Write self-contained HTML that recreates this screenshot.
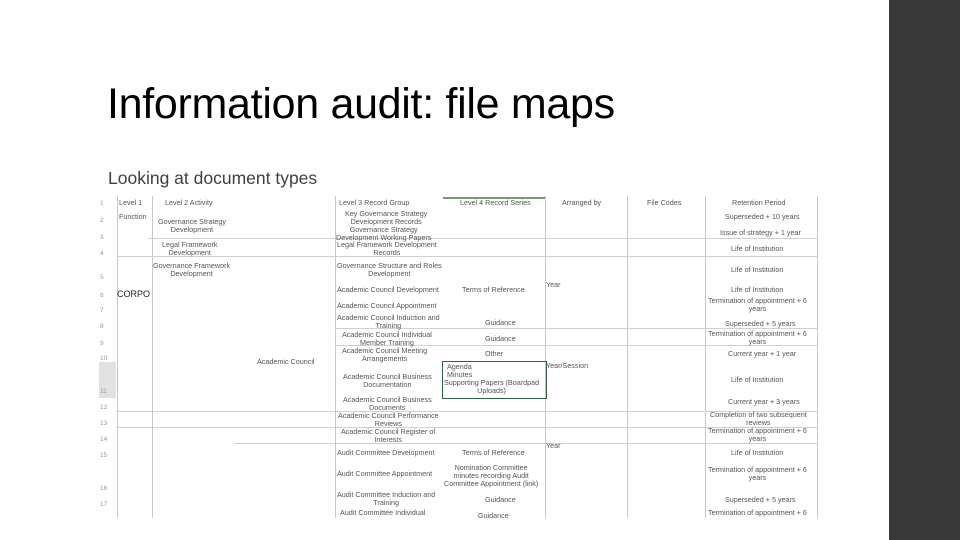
<!DOCTYPE html>
<html><head><meta charset="utf-8"><style>
*{margin:0;padding:0}
body{width:960px;height:540px;position:relative;background:#fff;font-family:"Liberation Sans",sans-serif;overflow:hidden}
#side{position:absolute;left:889px;top:0;width:71px;height:540px;background:#383838}
h1{position:absolute;left:107px;top:80px;font-size:43px;font-weight:normal;color:#000;white-space:nowrap;letter-spacing:-0.3px}
.sub{position:absolute;left:108px;top:168px;font-size:17.5px;color:#404040;white-space:nowrap}
.v{position:absolute;width:1px;background:#c8c8c8}
.h{position:absolute;height:1px;background:#d0d0d0}
.t{position:absolute;font-size:7.2px;color:#555;text-align:center;line-height:8px;white-space:nowrap}
.n{position:absolute;left:100px;font-size:6.5px;color:#999}
</style></head><body>
<div id="side"></div>
<h1>Information audit: file maps</h1>
<div class="sub">Looking at document types</div>

<div class="v" style="left:117px;top:196px;height:322px"></div>
<div class="v" style="left:152px;top:196px;height:322px"></div>
<div class="v" style="left:335px;top:196px;height:322px"></div>
<div class="v" style="left:545px;top:196px;height:322px"></div>
<div class="v" style="left:627px;top:196px;height:322px"></div>
<div class="v" style="left:705px;top:196px;height:322px"></div>
<div class="v" style="left:817px;top:196px;height:322px"></div>
<div style="position:absolute;left:443px;top:197px;width:102px;height:2px;background:#6a9e78"></div>
<div style="position:absolute;left:99px;top:362px;width:17px;height:36px;background:#e2e2e2"></div>

<div class="h" style="left:148px;top:238px;width:669px"></div>
<div class="h" style="left:117px;top:256px;width:700px"></div>
<div class="h" style="left:335px;top:328px;width:482px"></div>
<div class="h" style="left:335px;top:345px;width:482px"></div>
<div class="h" style="left:117px;top:411px;width:700px"></div>
<div class="h" style="left:117px;top:427px;width:700px"></div>
<div class="h" style="left:234px;top:443px;width:583px"></div>
<div style="position:absolute;left:442px;top:361px;width:103px;height:36px;border:1px solid #2f5f40"></div>

<div class="n" style="top:200px">1</div><div class="n" style="top:217px">2</div><div class="n" style="top:234px">3</div><div class="n" style="top:250px">4</div><div class="n" style="top:274px">5</div><div class="n" style="top:292px">6</div><div class="n" style="top:307px">7</div><div class="n" style="top:323px">8</div><div class="n" style="top:340px">9</div><div class="n" style="top:355px">10</div><div class="n" style="top:388px">11</div><div class="n" style="top:404px">12</div><div class="n" style="top:420px">13</div><div class="n" style="top:436px">14</div><div class="n" style="top:452px">15</div><div class="n" style="top:485px">16</div><div class="n" style="top:501px">17</div>

<div class="t" style="left:119px;top:199px">Level 1</div>
<div class="t" style="left:119px;top:213px">Function</div>
<div class="t" style="left:117px;top:290px;font-size:9px;color:#222">CORPO</div>
<div class="t" style="left:165px;top:199px">Level 2 Activity</div>
<div class="t" style="left:158px;top:218px">Governance Strategy<br>Development</div>
<div class="t" style="left:162px;top:241px">Legal Framework<br>Development</div>
<div class="t" style="left:153px;top:262px">Governance Framework<br>Development</div>
<div class="t" style="left:257px;top:358px">Academic Council</div>
<div class="t" style="left:339px;top:199px">Level 3 Record Group</div>
<div class="t" style="left:345px;top:210px">Key Governance Strategy<br>Development Records</div>
<div class="t" style="left:336px;top:226px">Governance Strategy<br>Development Working Papers</div>
<div class="t" style="left:337px;top:241px">Legal Framework Development<br>Records</div>
<div class="t" style="left:337px;top:262px">Governance Structure and Roles<br>Development</div>
<div class="t" style="left:337px;top:286px">Academic Council Development</div>
<div class="t" style="left:337px;top:302px">Academic Council Appointment</div>
<div class="t" style="left:337px;top:314px">Academic Council Induction and<br>Training</div>
<div class="t" style="left:342px;top:331px">Academic Council Individual<br>Member Training</div>
<div class="t" style="left:342px;top:347px">Academic Council Meeting<br>Arrangements</div>
<div class="t" style="left:343px;top:373px">Academic Council Business<br>Documentation</div>
<div class="t" style="left:343px;top:396px">Academic Council Business<br>Documents</div>
<div class="t" style="left:338px;top:412px">Academic Council Performance<br>Reviews</div>
<div class="t" style="left:341px;top:428px">Academic Council Register of<br>Interests</div>
<div class="t" style="left:337px;top:449px">Audit Committee Development</div>
<div class="t" style="left:337px;top:470px">Audit Committee Appointment</div>
<div class="t" style="left:337px;top:491px">Audit Committee Induction and<br>Training</div>
<div class="t" style="left:340px;top:509px">Audit Committee Individual</div>
<div class="t" style="left:460px;top:199px">Level 4 Record Series</div>
<div class="t" style="left:462px;top:286px">Terms of Reference</div>
<div class="t" style="left:485px;top:319px">Guidance</div>
<div class="t" style="left:485px;top:335px">Guidance</div>
<div class="t" style="left:485px;top:350px">Other</div>
<div class="t" style="left:447px;top:363px;text-align:left">Agenda<br>Minutes</div>
<div class="t" style="left:444px;top:379px">Supporting Papers (Boardpad<br>Uploads)</div>
<div class="t" style="left:462px;top:449px">Terms of Reference</div>
<div class="t" style="left:444px;top:464px">Nomination Committee<br>minutes recording Audit<br>Committee Appointment (link)</div>
<div class="t" style="left:485px;top:496px">Guidance</div>
<div class="t" style="left:478px;top:512px">Guidance</div>
<div class="t" style="left:546px;top:281px">Year</div>
<div class="t" style="left:546px;top:362px">Year/Session</div>
<div class="t" style="left:546px;top:442px">Year</div>
<div class="t" style="left:562px;top:199px">Arranged by</div>
<div class="t" style="left:647px;top:199px">File Codes</div>
<div class="t" style="left:732px;top:199px">Retention Period</div>
<div class="t" style="left:725px;top:213px">Superseded + 10 years</div>
<div class="t" style="left:720px;top:229px">Issue of strategy + 1 year</div>
<div class="t" style="left:731px;top:245px">Life of Institution</div>
<div class="t" style="left:731px;top:266px">Life of Institution</div>
<div class="t" style="left:731px;top:286px">Life of Institution</div>
<div class="t" style="left:708px;top:297px">Termination of appointment + 6<br>years</div>
<div class="t" style="left:725px;top:320px">Superseded + 5 years</div>
<div class="t" style="left:708px;top:330px">Termination of appointment + 6<br>years</div>
<div class="t" style="left:728px;top:350px">Current year + 1 year</div>
<div class="t" style="left:731px;top:376px">Life of Institution</div>
<div class="t" style="left:728px;top:398px">Current year + 3 years</div>
<div class="t" style="left:710px;top:411px">Completion of two subsequent<br>reviews</div>
<div class="t" style="left:708px;top:427px">Termination of appointment + 6<br>years</div>
<div class="t" style="left:731px;top:449px">Life of Institution</div>
<div class="t" style="left:708px;top:466px">Termination of appointment + 6<br>years</div>
<div class="t" style="left:725px;top:496px">Superseded + 5 years</div>
<div class="t" style="left:708px;top:509px">Termination of appointment + 6</div>
</body></html>
